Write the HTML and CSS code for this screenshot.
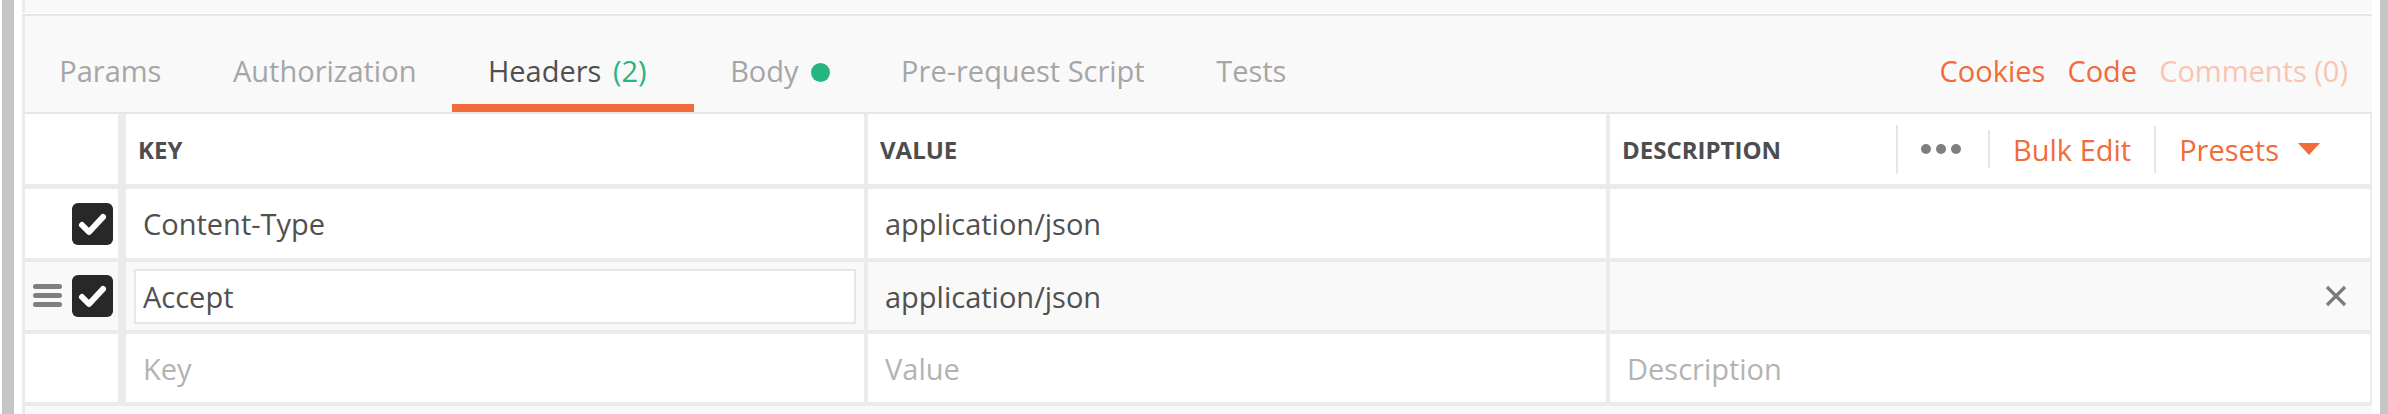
FILE: index.html
```html
<!DOCTYPE html>
<html lang="en">
<head>
<meta charset="utf-8">
<title>Headers</title>
<link rel="stylesheet" href="styles.css">
</head>
<body>
<div class="frame">
  <div class="scroll-left"></div>
  <div class="panel">
    <div class="topstrip"></div>
    <div class="tabbar">
      <nav class="tabs">
        <div class="tab">Params</div>
        <div class="tab">Authorization</div>
        <div class="tab active">Headers <span class="count">(2)</span></div>
        <div class="tab">Body<span class="dot"></span></div>
        <div class="tab">Pre-request Script</div>
        <div class="tab">Tests</div>
      </nav>
      <div class="links">
        <span class="link">Cookies</span>
        <span class="link">Code</span>
        <span class="link muted">Comments (0)</span>
      </div>
    </div>
    <div class="table">
      <div class="row head">
        <div class="cell c-check"></div>
        <div class="cell c-key"><span class="th">KEY</span></div>
        <div class="cell c-val"><span class="th">VALUE</span></div>
        <div class="cell c-desc">
          <span class="th grow">DESCRIPTION</span>
          <span class="vdiv d1"></span>
          <svg class="dots" width="40" height="10" viewBox="0 0 40 10"><circle cx="5" cy="5" r="5"/><circle cx="20" cy="5" r="5"/><circle cx="35" cy="5" r="5"/></svg>
          <span class="vdiv d2"></span>
          <span class="action bulk">Bulk Edit</span>
          <span class="vdiv d3"></span>
          <span class="action presets">Presets</span>
          <svg class="caret" width="22" height="12" viewBox="0 0 22 12"><polygon points="0,0 22,0 11,12"/></svg>
        </div>
      </div>
      <div class="row first">
        <div class="cell c-check">
          <svg class="checkbox" width="41" height="42" viewBox="0 0 41 42"><rect x="0" y="0" width="41" height="42" rx="6"/><polyline points="10,22 17,29 31,14"/></svg>
        </div>
        <div class="cell c-key"><div class="field">Content-Type</div></div>
        <div class="cell c-val"><div class="field">application/json</div></div>
        <div class="cell c-desc"><div class="field"></div></div>
      </div>
      <div class="row hover">
        <div class="cell c-check">
          <svg class="drag" width="29" height="24" viewBox="0 0 29 24"><line x1="2.5" y1="2.5" x2="26.5" y2="2.5"/><line x1="2.5" y1="11.5" x2="26.5" y2="11.5"/><line x1="2.5" y1="20.5" x2="26.5" y2="20.5"/></svg>
          <svg class="checkbox" width="41" height="42" viewBox="0 0 41 42"><rect x="0" y="0" width="41" height="42" rx="6"/><polyline points="10,22 17,29 31,14"/></svg>
        </div>
        <div class="cell c-key"><div class="field focus">Accept</div></div>
        <div class="cell c-val"><div class="field">application/json</div></div>
        <div class="cell c-desc">
          <div class="field"></div>
          <svg class="remove" width="22" height="22" viewBox="0 0 22 22"><line x1="2" y1="2" x2="20" y2="20"/><line x1="20" y1="2" x2="2" y2="20"/></svg>
        </div>
      </div>
      <div class="row">
        <div class="cell c-check"></div>
        <div class="cell c-key"><div class="field ph">Key</div></div>
        <div class="cell c-val"><div class="field ph">Value</div></div>
        <div class="cell c-desc"><div class="field ph">Description</div></div>
      </div>
    </div>
  </div>
  <div class="scroll-right"></div>
</div>
</body>
</html>
```

FILE: styles.css
```css
* {
  box-sizing: border-box;
  margin: 0;
  padding: 0;
}

html,
body {
  width: 2388px;
  height: 414px;
  overflow: hidden;
  background: #ffffff;
}

body {
  font-family: "Open Sans", "Noto Sans", sans-serif;
  color: #505050;
}

.frame {
  display: flex;
  height: 414px;
}

.scroll-left {
  width: 12px;
  margin-left: 2px;
  margin-right: 8px;
  background: #c6c6c6;
}

.scroll-right {
  width: 8px;
  margin-left: 8px;
  background: #c6c6c6;
}

.panel {
  flex: 1;
  display: flex;
  flex-direction: column;
  background: #f9f9f9;
  box-shadow: inset 3px 0 0 #ebebeb;
}

.topstrip {
  height: 14px;
  border-bottom: 1px solid #ffffff;
}

.tabbar {
  display: flex;
  height: 98px;
  border-top: 2px solid #e6e6e6;
}

.tabs {
  display: flex;
  padding-left: 1.5px;
}

.tab {
  height: 96px;
  padding: 35px 35.75px 0;
  border-bottom: 8px solid transparent;
  font-size: 29px;
  line-height: 40px;
  color: #a6a6a6;
  white-space: nowrap;
}

.tab.active {
  color: #505050;
  border-bottom-color: #f26b3a;
}

.count {
  color: #26b47f;
  margin-left: 4px;
  margin-right: 12px;
}

.dot {
  display: inline-block;
  width: 19px;
  height: 19px;
  margin-left: 12px;
  border-radius: 50%;
  background: #26b47f;
}

.links {
  display: flex;
  margin-left: auto;
  padding-right: 24px;
}

.link {
  padding-top: 35px;
  margin-left: 22px;
  font-size: 29px;
  line-height: 40px;
  color: #f26b3a;
  white-space: nowrap;
}

.link.muted {
  color: #f9c5b1;
}

.table {
  background: #ffffff;
  border-top: 2px solid #e6e6e6;
  border-left: 3px solid #ebebeb;
  border-right: 2px solid #ebebeb;
}

.row {
  display: flex;
  height: 72px;
  border-bottom: 4px solid #ebebeb;
}

.row.head {
  height: 75px;
  border-bottom-width: 5px;
}

.row.first {
  height: 73px;
}

.row.hover {
  background: #f9f9f9;
}

.cell {
  display: flex;
  align-items: center;
}

.c-check {
  width: 101px;
  border-right: 8px solid #ebebeb;
  justify-content: flex-end;
  padding-right: 5px;
  gap: 10px;
}

.c-key,
.c-val {
  width: 742px;
  border-right: 4px solid #ebebeb;
}

.c-desc {
  flex: 1;
}

.th {
  padding-left: 12px;
  font-size: 24px;
  font-weight: 700;
  color: #4d4d4d;
  white-space: nowrap;
}

.grow {
  flex: 1;
}

.vdiv {
  width: 2px;
  background: #e6e6e6;
}

.vdiv.d1 {
  height: 49px;
}

.vdiv.d2 {
  height: 38px;
}

.vdiv.d3 {
  height: 47px;
}

.dots {
  margin-left: 23px;
  margin-right: 27px;
  fill: #7f7f7f;
}

.action {
  font-size: 29px;
  color: #f26b3a;
  white-space: nowrap;
}

.bulk {
  margin-left: 23px;
  margin-right: 23px;
}

.presets {
  margin-left: 23px;
  margin-right: 19px;
}

.caret {
  fill: #f26b3a;
  margin-right: 50px;
}

.checkbox rect {
  fill: #282828;
}

.checkbox polyline {
  fill: none;
  stroke: #ffffff;
  stroke-width: 6;
  stroke-linecap: round;
  stroke-linejoin: round;
}

.drag line {
  stroke: #7f7f7f;
  stroke-width: 5;
  stroke-linecap: round;
}

.field {
  flex: 1;
  height: 55px;
  margin: 0 8px;
  padding-left: 7px;
  border: 2px solid transparent;
  display: flex;
  align-items: center;
  font-size: 29px;
  color: #505050;
  white-space: nowrap;
}

.field.focus {
  border-color: #e6e6e6;
  background: #ffffff;
}

.field.ph {
  color: #b3b3b3;
}

.remove {
  margin-right: 23px;
}

.remove line {
  stroke: #7b7b7b;
  stroke-width: 3.2;
}
```
